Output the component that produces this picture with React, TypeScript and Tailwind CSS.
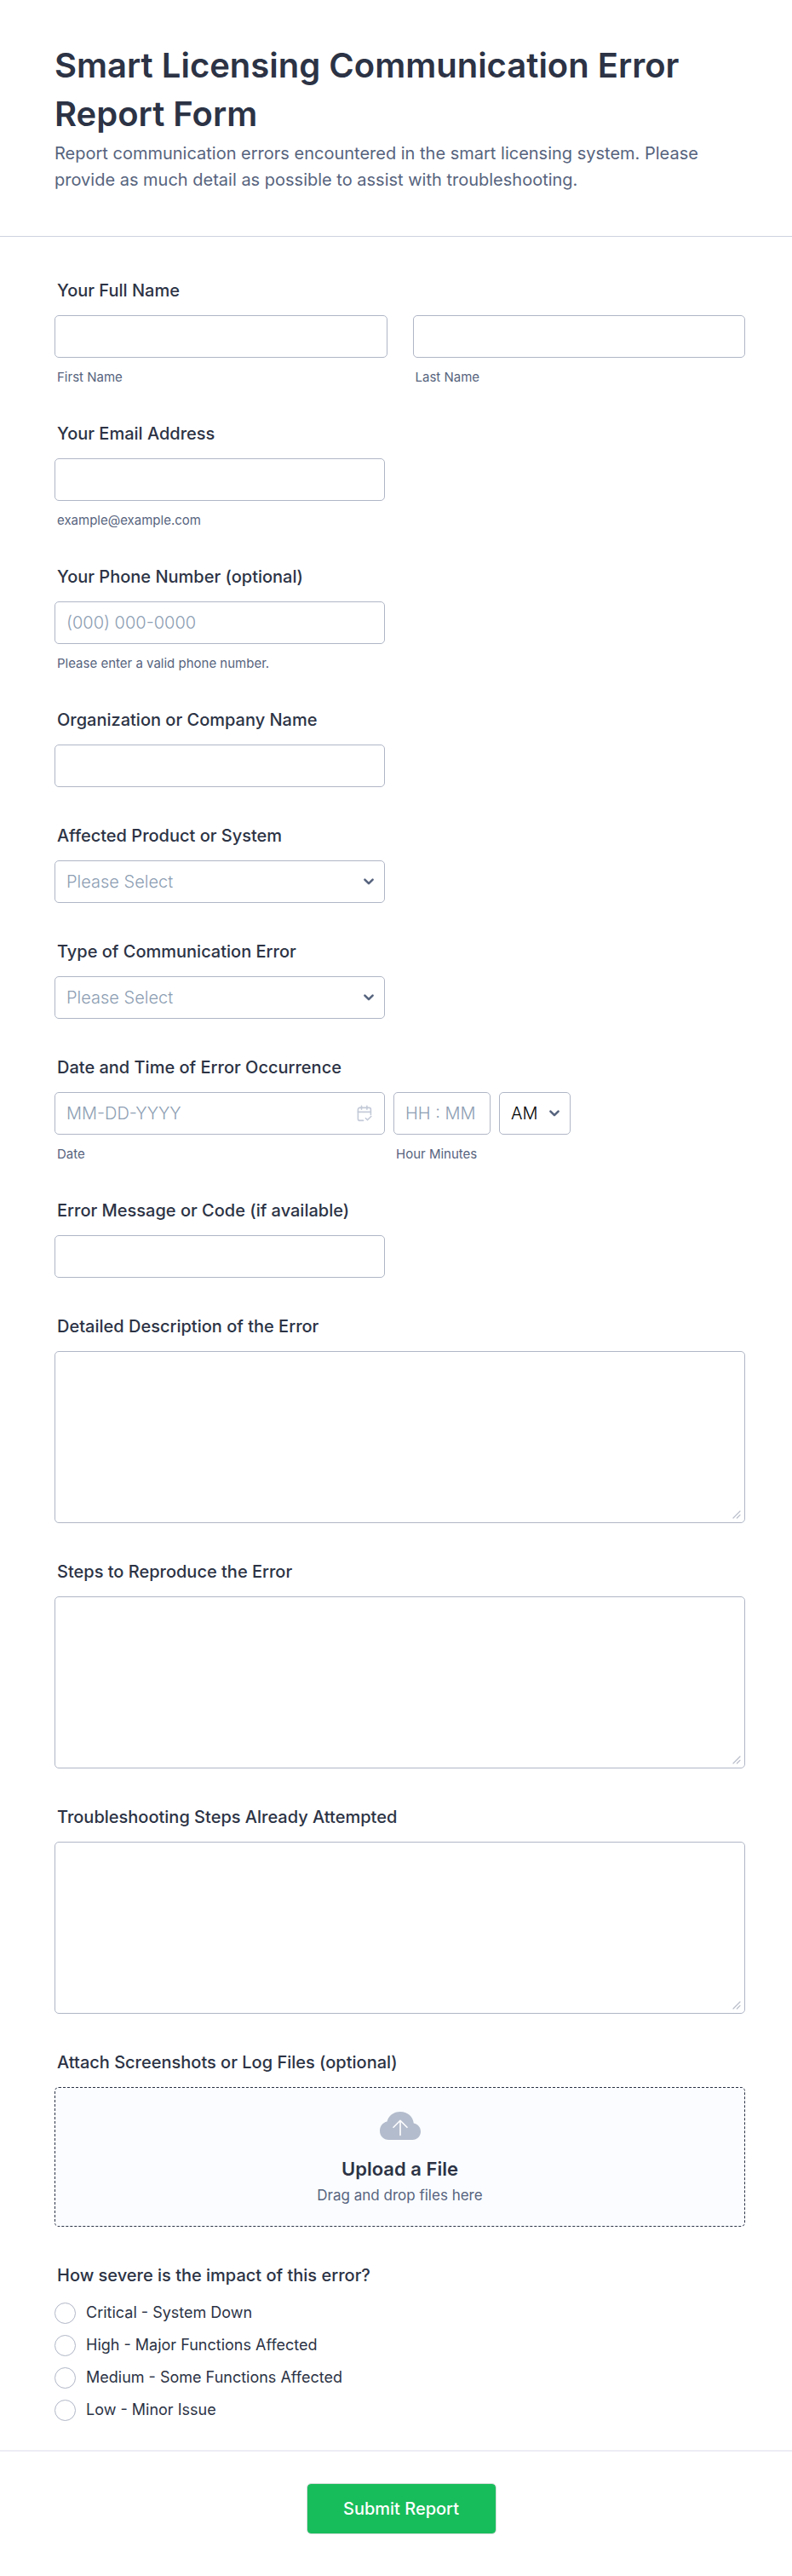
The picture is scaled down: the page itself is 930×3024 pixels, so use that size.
import type { ReactNode } from "react";

const LABEL = "block pl-[3px] text-[20px] leading-6 font-medium text-[#2c3345]";
const SUB = "mt-[14px] block pl-[3px] text-[15px] leading-[18px] text-[#57647e]";
const BOX =
  "block h-[50px] w-full rounded-[5px] border border-[#b0b6c6] bg-white px-[13px] text-[20px] font-light text-black outline-none placeholder:text-[#8d9eb3] placeholder:opacity-100 focus:border-[#4277ff]";

function Field({ id, label, children }: { id: string; label: string; children: ReactNode }) {
  return (
    <div className="mb-[45px]">
      <label htmlFor={id} className={LABEL}>
        {label}
      </label>
      <div className="mt-[17px]">{children}</div>
    </div>
  );
}

function Chevron() {
  return (
    <svg
      viewBox="0 0 14 10"
      className="pointer-events-none absolute top-1/2 right-3 h-[10px] w-[14px] -translate-y-1/2"
      fill="none"
      stroke="#57647e"
      strokeWidth="2.6"
      strokeLinecap="round"
      strokeLinejoin="round"
      aria-hidden="true"
    >
      <path d="M2.4 2.6 7 7.2l4.6-4.6" />
    </svg>
  );
}

function CalendarIcon() {
  return (
    <svg
      viewBox="0 0 18 20"
      className="pointer-events-none absolute top-[15px] right-[15px] h-5 w-[18px]"
      fill="none"
      stroke="#c3cad8"
      strokeWidth="1.6"
      strokeLinecap="round"
      strokeLinejoin="round"
      aria-hidden="true"
    >
      <path d="M16.4 11.6V5.4a2 2 0 0 0-2-2H3.4a2 2 0 0 0-2 2v11a2 2 0 0 0 2 2h4.2" />
      <path d="M1.4 8.4h15M5.5 1.4v3.8M11.9 1.4v3.8M10.4 15.7l2.1 2.1 4.3-4.3" />
    </svg>
  );
}

function SelectField({ id, label, options }: { id: string; label: string; options: string[] }) {
  return (
    <Field id={id} label={label}>
      <div className="relative w-[388px] max-w-full">
        <select
          id={id}
          defaultValue=""
          className="block h-[50px] w-full appearance-none rounded-[5px] border border-[#b0b6c6] bg-white px-[13px] text-[20px] font-light text-[#8d9eb3] outline-none focus:border-[#4277ff]"
        >
          <option value="">Please Select</option>
          {options.map((o) => (
            <option key={o}>{o}</option>
          ))}
        </select>
        <Chevron />
      </div>
    </Field>
  );
}

function TextAreaField({ id, label }: { id: string; label: string }) {
  return (
    <Field id={id} label={label}>
      <div className="relative">
        <textarea
          id={id}
          className="block h-[202px] w-full resize-none rounded-[5px] border border-[#b0b6c6] bg-white px-[13px] py-2 text-[20px] font-light outline-none focus:border-[#4277ff]"
        />
        <svg
          viewBox="0 0 10 10"
          className="pointer-events-none absolute right-[5px] bottom-[5px] h-[10px] w-[10px]"
          stroke="#b8bdc9"
          strokeWidth="1.2"
          strokeLinecap="round"
          aria-hidden="true"
        >
          <path d="M1 9 9 1M5.4 9 9 5.4" />
        </svg>
      </div>
    </Field>
  );
}

const SEVERITIES = [
  "Critical - System Down",
  "High - Major Functions Affected",
  "Medium - Some Functions Affected",
  "Low - Minor Issue",
];

export default function App() {
  return (
    <form
      className="w-full bg-white font-['Inter',sans-serif]"
      onSubmit={(e) => e.preventDefault()}
    >
      <header className="border-b border-[#ced3e0] pt-12 pr-[55px] pb-[50px] pl-16">
        <h1 className="text-[40px] leading-[57px] font-semibold text-[#2c3345]">
          Smart Licensing Communication Error Report Form
        </h1>
        <p className="mt-[3px] text-[20px] leading-[31px] text-[#57647e]">
          Report communication errors encountered in the smart licensing system. Please provide as
          much detail as possible to assist with troubleshooting.
        </p>
      </header>

      <main className="pt-[51px] pr-[55px] pb-[34px] pl-16">
        <fieldset className="mb-[45px]">
          <legend className={LABEL}>Your Full Name</legend>
          <div className="mt-[17px] flex gap-[30px]">
            <div className="flex-1">
              <input id="first" type="text" className={BOX} />
              <label htmlFor="first" className={SUB}>
                First Name
              </label>
            </div>
            <div className="flex-1">
              <input id="last" type="text" className={BOX} />
              <label htmlFor="last" className={SUB}>
                Last Name
              </label>
            </div>
          </div>
        </fieldset>

        <Field id="email" label="Your Email Address">
          <div className="w-[388px] max-w-full">
            <input id="email" type="email" className={BOX} />
            <span className={SUB}>example@example.com</span>
          </div>
        </Field>

        <Field id="phone" label="Your Phone Number (optional)">
          <div className="w-[388px] max-w-full">
            <input id="phone" type="tel" placeholder="(000) 000-0000" className={BOX} />
            <span className={SUB}>Please enter a valid phone number.</span>
          </div>
        </Field>

        <Field id="org" label="Organization or Company Name">
          <div className="w-[388px] max-w-full">
            <input id="org" type="text" className={BOX} />
          </div>
        </Field>

        <SelectField id="product" label="Affected Product or System" options={[]} />
        <SelectField id="type" label="Type of Communication Error" options={[]} />

        <Field id="date" label="Date and Time of Error Occurrence">
          <div className="flex flex-wrap gap-[10px]">
            <div className="w-[388px] max-w-full">
              <div className="relative">
                <input id="date" type="text" placeholder="MM-DD-YYYY" className={BOX} />
                <CalendarIcon />
              </div>
              <label htmlFor="date" className={SUB}>
                Date
              </label>
            </div>
            <div className="w-[114px]">
              <input id="time" type="text" placeholder="HH : MM" className={BOX} />
              <label htmlFor="time" className={SUB}>
                Hour Minutes
              </label>
            </div>
            <div className="relative h-[50px] w-[84px]">
              <select
                aria-label="AM or PM"
                className="block h-[50px] w-full appearance-none rounded-[5px] border border-[#b0b6c6] bg-white px-[13px] text-[20px] font-light text-black outline-none focus:border-[#4277ff]"
              >
                <option>AM</option>
                <option>PM</option>
              </select>
              <Chevron />
            </div>
          </div>
        </Field>

        <Field id="code" label="Error Message or Code (if available)">
          <div className="w-[388px] max-w-full">
            <input id="code" type="text" className={BOX} />
          </div>
        </Field>

        <TextAreaField id="description" label="Detailed Description of the Error" />
        <TextAreaField id="steps" label="Steps to Reproduce the Error" />
        <TextAreaField id="attempted" label="Troubleshooting Steps Already Attempted" />

        <Field id="files" label="Attach Screenshots or Log Files (optional)">
          <label
            htmlFor="files"
            className="relative flex cursor-pointer flex-col items-center rounded-[5px] border border-dashed border-[#2c3345] bg-[#fafcff] pt-7 pb-[25px] text-center"
          >
            <input id="files" type="file" multiple className="sr-only" />
            <svg viewBox="0 0 48 33" className="h-[33px] w-12" aria-hidden="true">
              <path
                fill="#b3bccc"
                d="M10.5 33C4.5 33 0 28.5 0 22.5 0 17 3.5 12.8 8.5 11.6 10 4.8 16 0 24 0c8.5 0 15 5.5 15.8 13.6 5 1 8.2 4.8 8.2 9.7 0 5.5-4.2 9.7-9.7 9.7Z"
              />
              <path
                d="M24 27.5V10.5M16 18.3l8-8 8 8"
                fill="none"
                stroke="#fff"
                strokeWidth="1.6"
                strokeLinecap="round"
                strokeLinejoin="round"
              />
            </svg>
            <span className="mt-5 text-[22px] leading-7 font-semibold text-[#2c3345]">
              Upload a File
            </span>
            <span className="mt-[6px] text-[17px] leading-[22px] text-[#57647e]">
              Drag and drop files here
            </span>
          </label>
        </Field>

        <fieldset>
          <legend className={LABEL}>How severe is the impact of this error?</legend>
          <div className="mt-[19px] flex flex-col gap-3">
            {SEVERITIES.map((s) => (
              <label
                key={s}
                className="flex h-[26px] items-center gap-3 text-[18px] leading-[26px] text-[#2c3345]"
              >
                <input
                  type="radio"
                  name="severity"
                  value={s}
                  className="h-[25px] w-[25px] shrink-0 appearance-none rounded-full border border-[#b0b6c6] bg-white checked:border-8 checked:border-[#4277ff]"
                />
                {s}
              </label>
            ))}
          </div>
        </fieldset>
      </main>

      <footer className="flex justify-center border-t-2 border-[#ecedf5] pt-[37px] pb-[49px] pl-3">
        <button
          type="submit"
          className="h-[60px] min-w-[223px] rounded-[5px] border border-[#d5ddda] bg-[#18bd5b] bg-clip-padding px-10 text-[20px] font-medium text-white"
        >
          Submit Report
        </button>
      </footer>
    </form>
  );
}
